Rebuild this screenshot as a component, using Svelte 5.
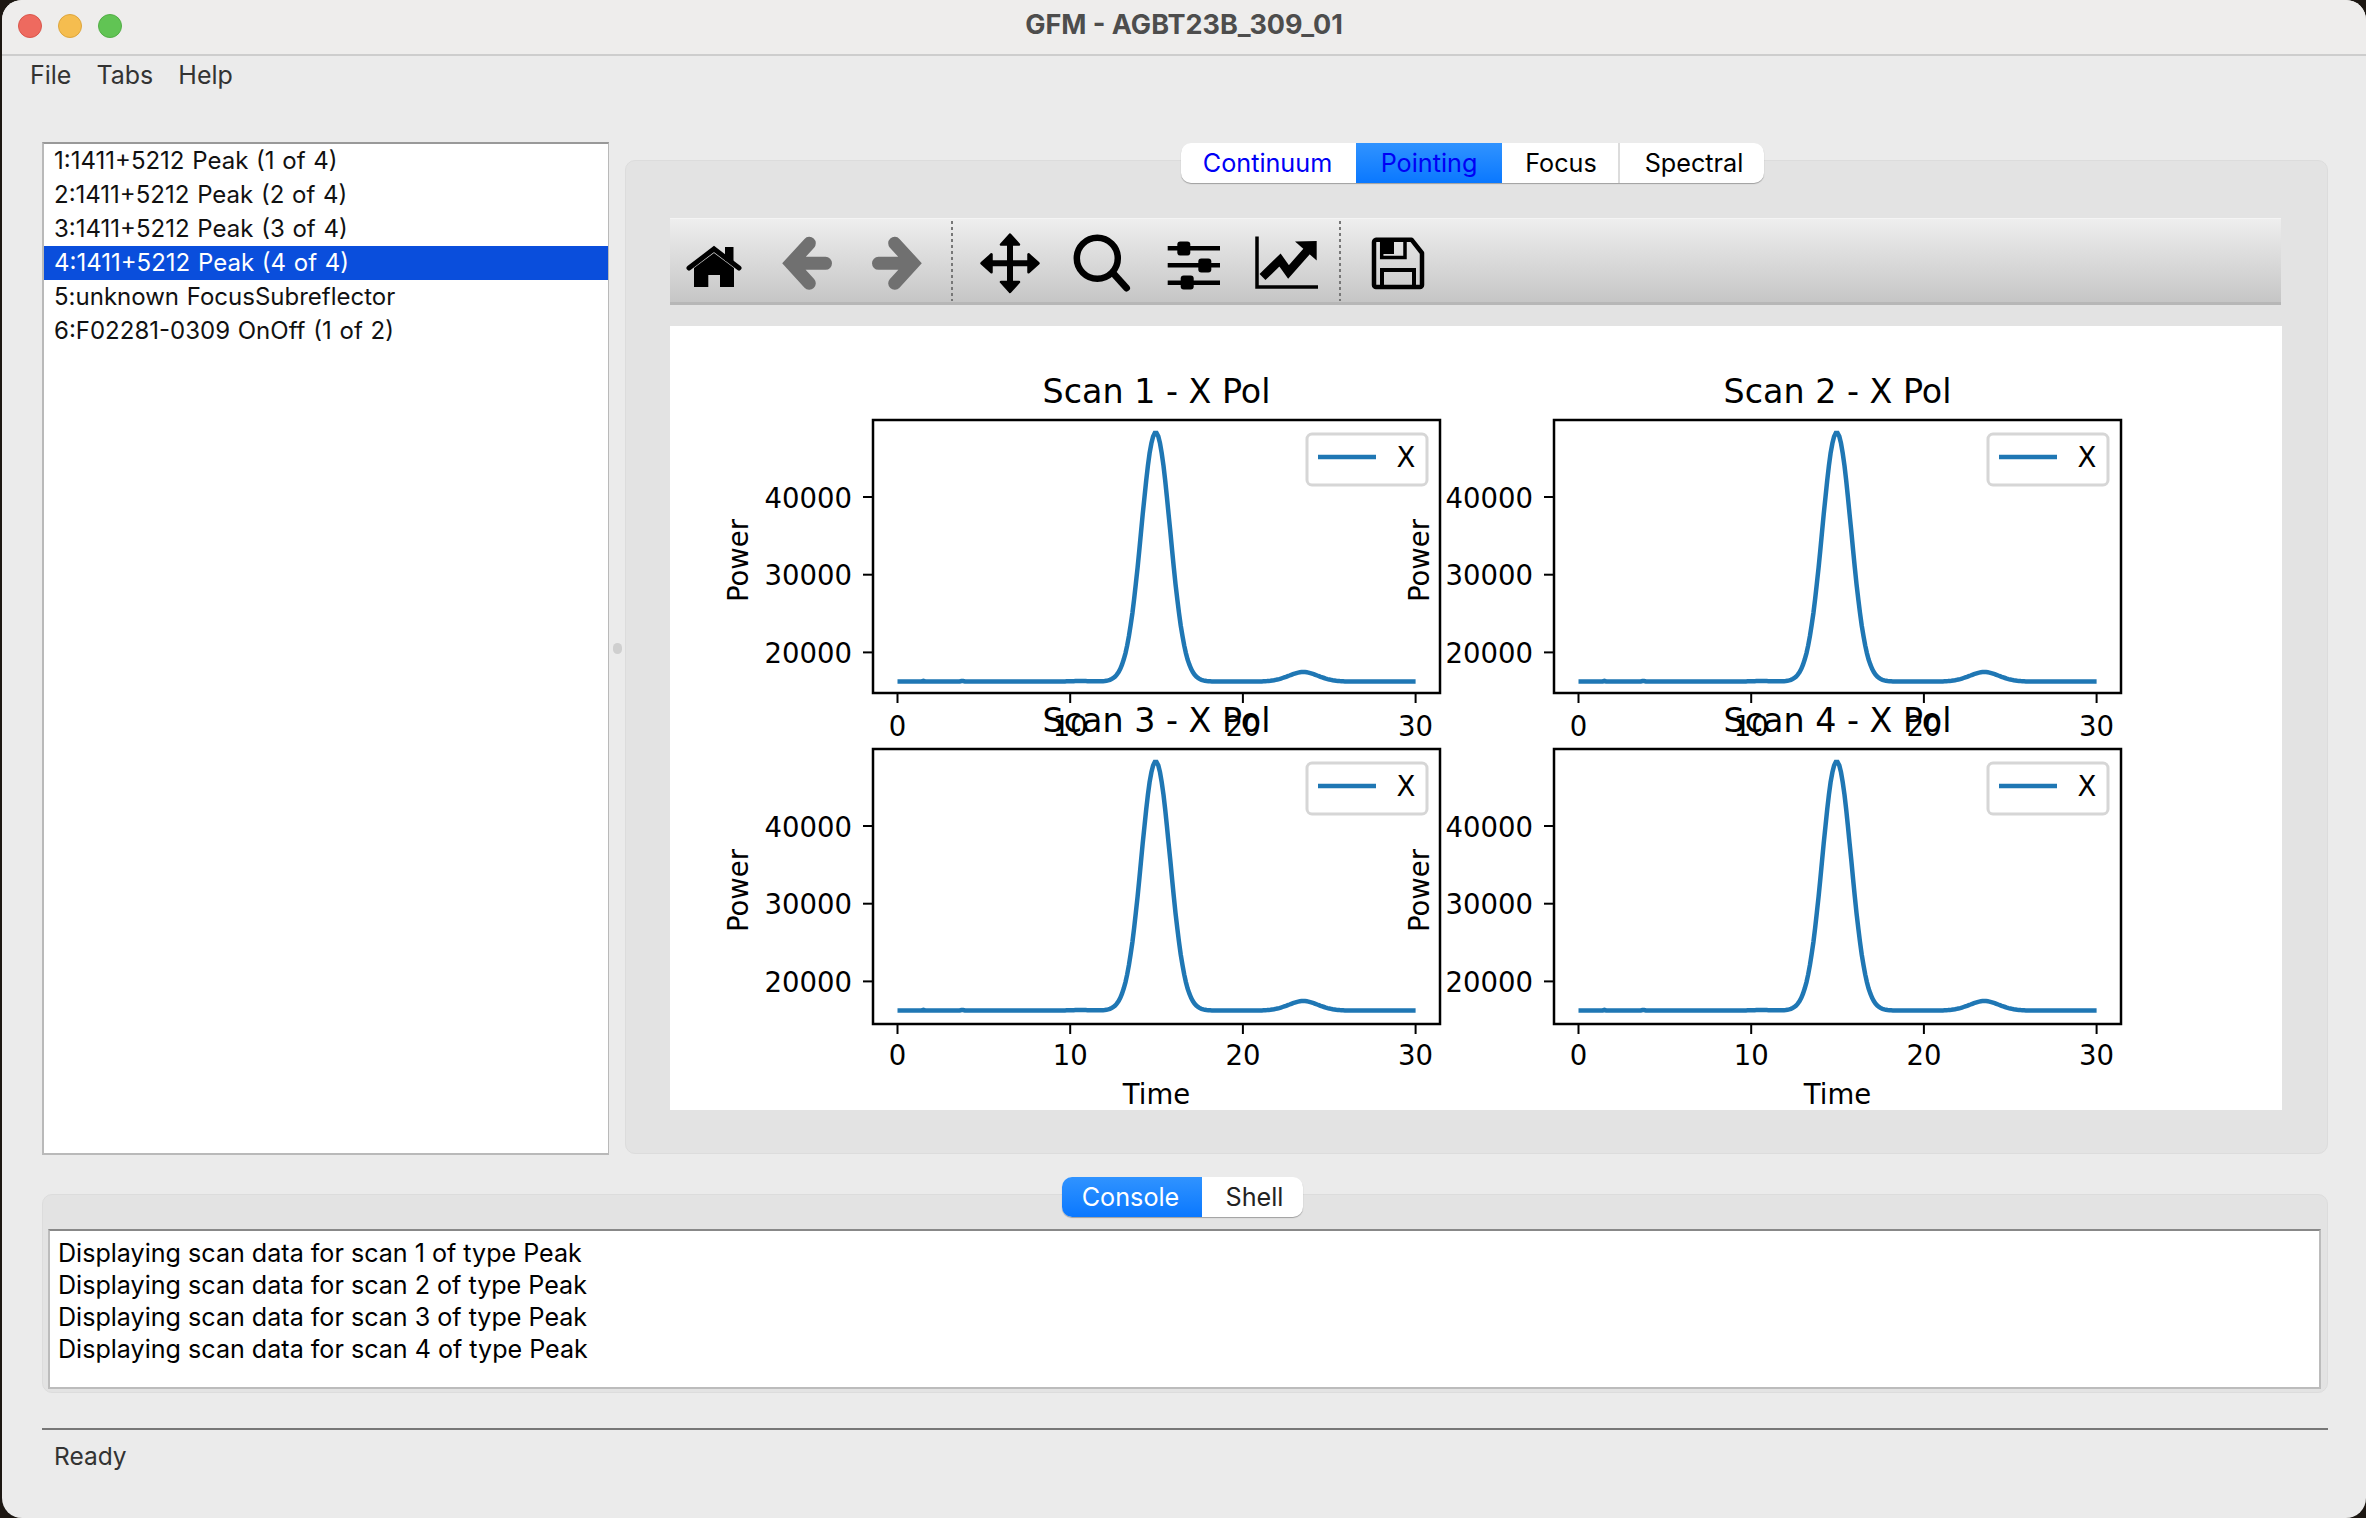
<script>
  const scans = [
    '1:1411+5212 Peak (1 of 4)',
    '2:1411+5212 Peak (2 of 4)',
    '3:1411+5212 Peak (3 of 4)',
    '4:1411+5212 Peak (4 of 4)',
    '5:unknown FocusSubreflector',
    '6:F02281-0309 OnOff (1 of 2)'
  ];
  const logs = [1, 2, 3, 4].map((n) => `Displaying scan data for scan ${n} of type Peak`);
  const axes = [
    { n: 1, left: 203, top: 94, h: 273, tickY: 316, time: false },
    { n: 2, left: 884, top: 94, h: 273, tickY: 316, time: false },
    { n: 3, left: 203, top: 423, h: 275, tickY: 316, time: true },
    { n: 4, left: 884, top: 423, h: 275, tickY: 316, time: true }
  ];
  const W = 567;
  const xOf = (t) => 24.5 + t * 17.27;
  const yOf = (v) => 77 + (40000 - v) * 0.00777;
  const gauss = (t, c, s) => Math.exp(-((t - c) ** 2) / (2 * s * s));
  function power(t) {
    return 16250 + 32050 * gauss(t, 14.95, 0.84) + 1220 * gauss(t, 23.5, 0.85)
      + 90 * gauss(t, 1.5, 0.06) + 90 * gauss(t, 3.75, 0.06) + 60 * gauss(t, 10.6, 0.6);
  }
  const pts = [];
  for (let t = 0; t <= 30.001; t += 0.1) pts.push(`${xOf(t).toFixed(1)},${yOf(power(t)).toFixed(1)}`);
  const curve = pts.join(' ');
  const xticks = [0, 10, 20, 30];
  const yticks = [40000, 30000, 20000];
</script>

<div class="window">
  <header class="titlebar">
    <div class="lights">
      <span class="light red"></span>
      <span class="light yellow"></span>
      <span class="light green"></span>
    </div>
    <div class="wintitle">GFM - AGBT23B_309_01</div>
  </header>

  <nav class="menubar">
    <span>File</span>
    <span>Tabs</span>
    <span>Help</span>
  </nav>

  <main class="top">
    <ul class="list">
      {#each scans as s, i}
        <li class:sel={i === 3}>{s}</li>
      {/each}
    </ul>
    <div class="splitter"><span class="dot"></span></div>
    <section class="tabcol">
      <div class="seg seg-main">
        <span class="tab blue continuum">Continuum</span>
        <span class="tab blue active pointing">Pointing</span>
        <span class="tab focus">Focus</span>
        <span class="tab spectral">Spectral</span>
      </div>
      <div class="panel">
        <div class="toolbar">
          <svg class="tool home" viewBox="0 0 60 60">
            <path d="M5 35 30 16 55 35" fill="none" stroke="#000" stroke-width="5" stroke-linecap="round" stroke-linejoin="miter" />
            <path d="M41 14h8.500v14H41z" fill="#000" />
            <path d="M10 35 30 20 50 35v19H36V42H24.300v12H10z" fill="#000" />
          </svg>
          <svg class="tool back" viewBox="0 0 60 60">
            <path d="M32.300 10.300 14 30.300 32.300 50.300M14 30.300H48.500" fill="none" stroke="#707070" stroke-width="13" stroke-linecap="round" stroke-linejoin="miter" />
          </svg>
          <svg class="tool forward" viewBox="0 0 60 60">
            <path d="M27.700 10.300 46 30.300 27.700 50.300M46 30.300H11.500" fill="none" stroke="#707070" stroke-width="13" stroke-linecap="round" stroke-linejoin="miter" />
          </svg>
          <span class="sep sep-a"></span>
          <svg class="tool move" viewBox="0 0 60 60">
            <path d="M30 6V54M6 30.300H54" stroke="#000" stroke-width="6" fill="none" />
            <path d="M30 1.500 21 11.500H39zM30 59 21 49H39zM1.500 30.300 11.500 21.300V39.300zM58.500 30.300 48.500 21.300V39.300z" fill="#000" stroke="#000" stroke-width="2.500" stroke-linejoin="round" />
          </svg>
          <svg class="tool zoom" viewBox="0 0 60 60">
            <circle cx="25.300" cy="25.300" r="20.500" fill="none" stroke="#000" stroke-width="6.500" />
            <path d="M41 40 54.500 55" stroke="#000" stroke-width="7" stroke-linecap="round" />
          </svg>
          <svg class="tool sliders" viewBox="0 0 60 60">
            <path d="M3.700 15.300H56M3.700 32.300H56M3.700 49.700H56" stroke="#000" stroke-width="4.500" />
            <rect x="13.300" y="8.500" width="13" height="14" rx="3" />
            <rect x="34.300" y="25.500" width="13" height="14" rx="3" />
            <rect x="16.700" y="42.500" width="13" height="14" rx="3" />
          </svg>
          <svg class="tool chart" viewBox="0 0 60 60">
            <path d="M1 3.500V54H62" fill="none" stroke="#000" stroke-width="3.500" />
            <path d="M6.500 44 24 27 32.500 39 51 18" fill="none" stroke="#000" stroke-width="8.500" stroke-linejoin="miter" />
            <path d="M39 8.500 60.700 8V27.500z" fill="#000" />
          </svg>
          <span class="sep sep-b"></span>
          <svg class="tool save" viewBox="0 0 60 60">
            <path d="M9 6.700H44.500L55 20V52a2 2 0 0 1-2 2H9a2 2 0 0 1-2-2V9a2 2 0 0 1 2-2z" fill="none" stroke="#000" stroke-width="4.500" stroke-linejoin="round" />
            <path d="M14.700 6H27V21H14.700z" fill="#000" />
            <path d="M14.700 6V24.500H38V6" fill="none" stroke="#000" stroke-width="3.500" />
            <path d="M15 53V37H47V53" fill="none" stroke="#000" stroke-width="4" />
          </svg>
          <span class="sep-fill"></span>
        </div>
        <svg class="figure" viewBox="0 0 1612 784" width="1612" height="784">
          {#each axes as a}
            <g transform="translate({a.left} {a.top})">
              <text class="title" x={W / 2} y="-17" text-anchor="middle">Scan {a.n} - X Pol</text>
              <polyline points={curve} fill="none" stroke="#1f77b4" stroke-width="4.500" />
              <rect x="0" y="0" width={W} height={a.h} fill="none" stroke="#000" stroke-width="2.500" />
              {#each yticks as v}
                <path d="M0 {yOf(v)}H-10" stroke="#000" stroke-width="2" />
                <text class="tick" x="-21" y={yOf(v) + 10.500} text-anchor="end">{v}</text>
              {/each}
              {#each xticks as t}
                <path d="M{xOf(t)} {a.h}v10" stroke="#000" stroke-width="2" />
                <text class="tick" x={xOf(t)} y={a.tickY} text-anchor="middle">{t}</text>
              {/each}
              <text class="tick" transform="translate(-125 {a.h / 2 + 4}) rotate(-90)" text-anchor="middle">Power</text>
              {#if a.time}
                <text class="tick" x={W / 2} y={a.h + 80} text-anchor="middle">Time</text>
              {/if}
              <rect x="434" y="14" width="120" height="51" rx="5" fill="#fff" stroke="#d6d6d6" stroke-width="3" />
              <path d="M445 37H503" stroke="#1f77b4" stroke-width="4.500" />
              <text class="tick" x="533" y="47" text-anchor="middle">X</text>
            </g>
          {/each}
        </svg>
      </div>
    </section>
  </main>

  <section class="console">
    <div class="seg seg-console">
      <span class="tab active white consoletab">Console</span>
      <span class="tab shelltab">Shell</span>
    </div>
    <div class="cpanel">
      <div class="log">
        {#each logs as l}
          <div>{l}</div>
        {/each}
      </div>
    </div>
  </section>

  <footer class="status">Ready</footer>
</div>

<style>
  :global(body) {
    margin: 0;
    background: #1c1712;
  }
  .window {
    margin-left: 2px;
    width: 2364px;
    height: 1518px;
    background: #ebebeb;
    border-radius: 20px;
    overflow: hidden;
    display: flex;
    flex-direction: column;
    font-family: Inter, "Liberation Sans", Arial, sans-serif;
    color: #111;
  }
  .titlebar {
    flex: none;
    height: 54px;
    background: #eeedec;
    border-bottom: 2px solid #cdcdcd;
    position: relative;
    display: flex;
    align-items: center;
    justify-content: center;
  }
  .lights {
    position: absolute;
    left: 16px;
    top: 14px;
    display: flex;
    gap: 16px;
  }
  .light {
    width: 24px;
    height: 24px;
    border-radius: 50%;
    box-sizing: border-box;
  }
  .red { background: #ee6a5f; border: 1px solid #d9564c; }
  .yellow { background: #f5bd4f; border: 1px solid #dda53c; }
  .green { background: #61c454; border: 1px solid #52ad46; }
  .wintitle {
    font-size: 27px;
    font-weight: 700;
    line-height: 30px;
    margin-top: -4px;
    color: #4d4d4d;
  }
  .menubar {
    flex: none;
    height: 86px;
    box-sizing: border-box;
    padding: 4px 0 0 28px;
    display: flex;
    gap: 25px;
    font-size: 25px;
    line-height: 30px;
    color: #333;
  }
  .top {
    flex: none;
    height: 1012px;
    display: flex;
    padding: 0 38px 0 40px;
  }
  .list {
    width: 567px;
    box-sizing: border-box;
    margin: 0 0 -1px;
    padding: 0;
    list-style: none;
    background: #fff;
    border: 2px solid #b9b9b9;
    border-top-color: #999;
    border-right-width: 1px;
    font-size: 24px;
    word-spacing: 1px;
  }
  .list li {
    height: 34px;
    line-height: 34px;
    padding-left: 10px;
    color: #111;
  }
  .list li.sel {
    background: #0a4edc;
    color: #fff;
  }
  .splitter {
    width: 16px;
    display: flex;
    align-items: center;
    justify-content: center;
  }
  .dot {
    width: 9px;
    height: 11px;
    border-radius: 5px;
    background: #cfcfcf;
  }
  .tabcol {
    flex: 1;
    min-width: 0;
    display: flex;
    flex-direction: column;
    align-items: center;
    padding-top: 1px;
  }
  .seg {
    position: relative;
    z-index: 1;
    flex: none;
    display: flex;
    height: 40px;
    background: #fff;
    border-radius: 10px;
    box-shadow: 0 1px 1px rgba(0, 0, 0, 0.3);
    overflow: hidden;
    font-size: 25.200px;
  }
  .seg-main { margin-right: 8px; }
  .seg-console { margin-right: 6px; }
  .tab {
    display: flex;
    align-items: center;
    justify-content: center;
    box-sizing: border-box;
    color: #000;
  }
  .continuum { width: 175px; padding-right: 2px; }
  .pointing { width: 146px; }
  .focus { width: 118px; padding-left: 2px; border-right: 2px solid #dcdcdc; }
  .spectral { width: 144px; padding-left: 4px; }
  .consoletab { width: 140px; padding-right: 2px; }
  .shelltab { width: 101px; padding-left: 5px; color: #222; }
  .tab.blue { color: #0000f5; }
  .tab.active { background: linear-gradient(#3093ff, #0a78ff); }
  .tab.white { color: #fff; }
  .panel {
    align-self: stretch;
    flex: 1;
    margin-top: -23px;
    box-sizing: border-box;
    background: #e3e3e3;
    border: 1px solid #dcdcdc;
    border-radius: 10px;
    padding: 57px 46px 0 44px;
    display: flex;
    flex-direction: column;
    align-items: flex-start;
  }
  .toolbar {
    flex: none;
    align-self: stretch;
    height: 87px;
    box-sizing: border-box;
    border-top: 1px solid #f4f4f4;
    border-bottom: 3px solid #b7b7b7;
    background: linear-gradient(#eeeeee, #c6c6c6);
    padding-left: 14px;
    display: flex;
    align-items: center;
    gap: 32px;
  }
  .tool {
    flex: none;
    width: 60px;
    height: 60px;
    overflow: visible;
    margin-top: 4px;
  }
  .back { margin-left: 1px; }
  .forward { margin-left: -2px; }
  .sep {
    flex: none;
    width: 2px;
    height: 80px;
    background: repeating-linear-gradient(#777 0 3px, transparent 3px 6px);
  }
  .sep-a { margin-left: -8px; }
  .move { margin-left: -5px; }
  .sep-b { margin-left: -9px; }
  .save { margin-left: -6px; }
  .sep-fill { flex: 1; }
  .figure {
    flex: none;
    display: block;
    margin-top: 21px;
    background: #fff;
  }
  .title {
    font-family: "DejaVu Sans", sans-serif;
    font-size: 33.300px;
    fill: #000;
  }
  .tick {
    font-family: "DejaVu Sans", sans-serif;
    font-size: 27.500px;
    fill: #000;
  }
  .console {
    flex: none;
    display: flex;
    flex-direction: column;
    align-items: center;
    padding: 23px 38px 0 40px;
  }
  .cpanel {
    align-self: stretch;
    height: 199px;
    margin-top: -23px;
    box-sizing: border-box;
    background: #e3e3e3;
    border: 1px solid #dcdcdc;
    border-radius: 10px;
    padding: 34px 6px 3px 5px;
  }
  .log {
    height: 100%;
    box-sizing: border-box;
    background: #fff;
    border: 2px solid #bcbcbc;
    border-top-color: #888;
    padding: 6px 0 0 8px;
    font-size: 25.100px;
    line-height: 32px;
    color: #000;
  }
  .status {
    flex: none;
    margin: 35px 38px 0 40px;
    border-top: 2px solid #777;
    padding: 11px 0 0 12px;
    font-size: 24.500px;
    line-height: 30px;
    color: #333;
  }
</style>
